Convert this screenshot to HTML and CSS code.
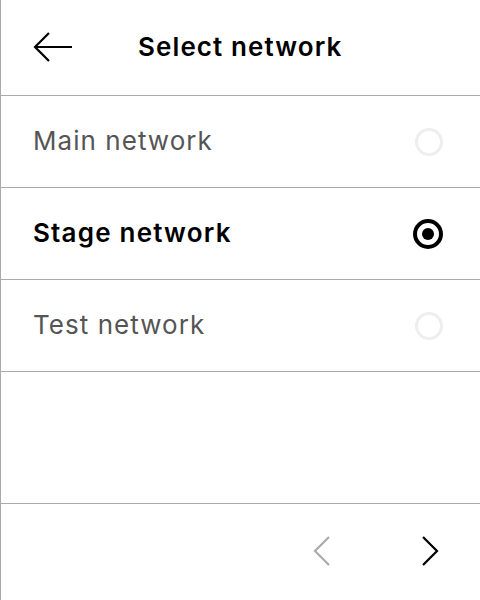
FILE: index.html
```html
<!DOCTYPE html>
<html>
<head>
<meta charset="utf-8">
<link rel="stylesheet" href="styles.css">
</head>
<body>
<div class="screen">
  <header class="header">
    <svg class="back" width="40" height="32" viewBox="0 0 40 32">
      <path d="M39 16H3M16 2L2 16l14 14" fill="none" stroke="#000" stroke-width="2.2"/>
    </svg>
    <h1 class="title">Select network</h1>
  </header>
  <ul class="list">
    <li class="row"><span class="label">Main network</span><span class="radio"></span></li>
    <li class="row selected"><span class="label">Stage network</span><span class="radio on"></span></li>
    <li class="row"><span class="label">Test network</span><span class="radio"></span></li>
  </ul>
  <div class="spacer"></div>
  <footer class="footer">
    <svg class="chev" width="20" height="32" viewBox="0 0 20 32">
      <path d="M17 2L3 16l14 14" fill="none" stroke="#aaa" stroke-width="2.2"/>
    </svg>
    <svg class="chev" width="20" height="32" viewBox="0 0 20 32">
      <path d="M3 2l14 14L3 30" fill="none" stroke="#000" stroke-width="2.2"/>
    </svg>
  </footer>
</div>
</body>
</html>
```
FILE: styles.css
```css
* { box-sizing: border-box; }
html, body { margin: 0; padding: 0; background: #fff; }
body { font-family: Inter, "Noto Sans", sans-serif; color: #000; }
.screen {
  width: 480px;
  height: 600px;
  display: flex;
  flex-direction: column;
  border-left: 1px solid #aaa;
}
.header {
  height: 96px;
  border-bottom: 1px solid #aaa;
  display: flex;
  align-items: center;
  padding-left: 32px;
}
.back { display: block; margin-top: -2px; }
.title {
  margin: 0 0 0 65px;
  font-size: 26px;
  font-weight: 600;
  letter-spacing: 1.1px;
  margin-top: -2px;
}
.list { list-style: none; margin: 0; padding: 0; }
.row {
  height: 92px;
  border-bottom: 1px solid #aaa;
  display: flex;
  align-items: center;
  justify-content: space-between;
  padding: 0 37px 0 32px;
}
.label { font-size: 26px; letter-spacing: 1.05px; color: #555; margin-top: -2px; }
.selected .label { color: #000; font-weight: 600; letter-spacing: 1.2px; }
.radio {
  width: 28px;
  height: 28px;
  border: 3px solid #eee;
  border-radius: 50%;
  display: flex;
  align-items: center;
  justify-content: center;
}
.radio.on {
  width: 30px;
  height: 30px;
  border: 4px solid #000;
}
.radio.on::after {
  content: "";
  width: 12px;
  height: 12px;
  border-radius: 50%;
  background: #000;
}
.spacer { flex: 1; border-bottom: 1px solid #aaa; }
.footer {
  height: 96px;
  display: flex;
  align-items: center;
  justify-content: flex-end;
  gap: 88px;
  padding-right: 40px;
}
.chev { display: block; margin-top: -2px; }
```
